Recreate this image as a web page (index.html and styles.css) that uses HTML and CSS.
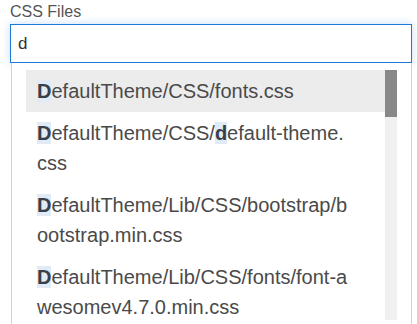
FILE: index.html
```html
<!DOCTYPE html>
<html lang="en">
<head>
    <meta charset="UTF-8">
    <meta name="viewport" content="width=device-width, initial-scale=1.0">
    <title>CSS Files</title>
    <link rel="stylesheet" href="styles.css">
</head>
<body>
    <div class="field">
        <label class="field-label" for="cssFiles">CSS Files</label>
        <div class="combo">
            <input class="combo-input" id="cssFiles" type="text" value="d" autocomplete="off">
            <div class="combo-menu">
                <ul class="combo-list">
                    <li class="combo-item active"><mark>D</mark>efaultTheme/CSS/fonts.css</li>
                    <li class="combo-item"><mark>D</mark>efaultTheme/CSS/<mark>d</mark>efault-theme.css</li>
                    <li class="combo-item"><mark>D</mark>efaultTheme/Lib/CSS/bootstrap/bootstrap.min.css</li>
                    <li class="combo-item"><mark>D</mark>efaultTheme/Lib/CSS/fonts/font-awesomev4.7.0.min.css</li>
                </ul>
                <div class="combo-scroll">
                    <div class="combo-thumb"></div>
                </div>
            </div>
        </div>
    </div>
</body>
</html>
```

FILE: styles.css
```css
body {
    margin: 0;
    background-color: #ffffff;
    font-family: 'Liberation Sans', Arial, sans-serif;
    overflow: hidden;
}

.field {
    padding: 2px 5px 0 10px;
}

.field-label {
    display: block;
    font-size: 16px;
    line-height: 20px;
    color: #555555;
    margin-bottom: 2px;
}

.combo-input {
    display: block;
    box-sizing: border-box;
    width: 100%;
    height: 39px;
    margin: 0;
    padding: 0 7px;
    border: 1px solid #1a7ad6;
    border-radius: 0;
    outline: none;
    font-family: 'Liberation Sans', Arial, sans-serif;
    font-size: 17px;
    color: #333333;
    background-color: #fff;
    box-shadow: 0 0 8px rgba(26, 122, 214, 0.25);
}

.combo-menu {
    display: flex;
    margin-left: 1px;
    padding: 7px 14px 4px 14px;
    border: 1px solid #cfd2d6;
    border-top: none;
    background-color: #fff;
}

.combo-list {
    flex: 1;
    list-style: none;
    margin: 0;
    padding: 0;
    height: 250px;
    overflow: hidden;
}

.combo-scroll {
    width: 12px;
    height: 250px;
    background-color: #f0f0f0;
}

.combo-thumb {
    height: 47px;
    background-color: #888888;
}

.combo-item {
    padding: 6px 32px 6px 11px;
    font-size: 20px;
    line-height: 30px;
    color: #4a4a4a;
    word-break: break-all;
    cursor: pointer;
}

.combo-item.active {
    background-color: #ececec;
}

.combo-item mark {
    background-color: #e1ebf5;
    color: #36404a;
    font-weight: bold;
}
```
